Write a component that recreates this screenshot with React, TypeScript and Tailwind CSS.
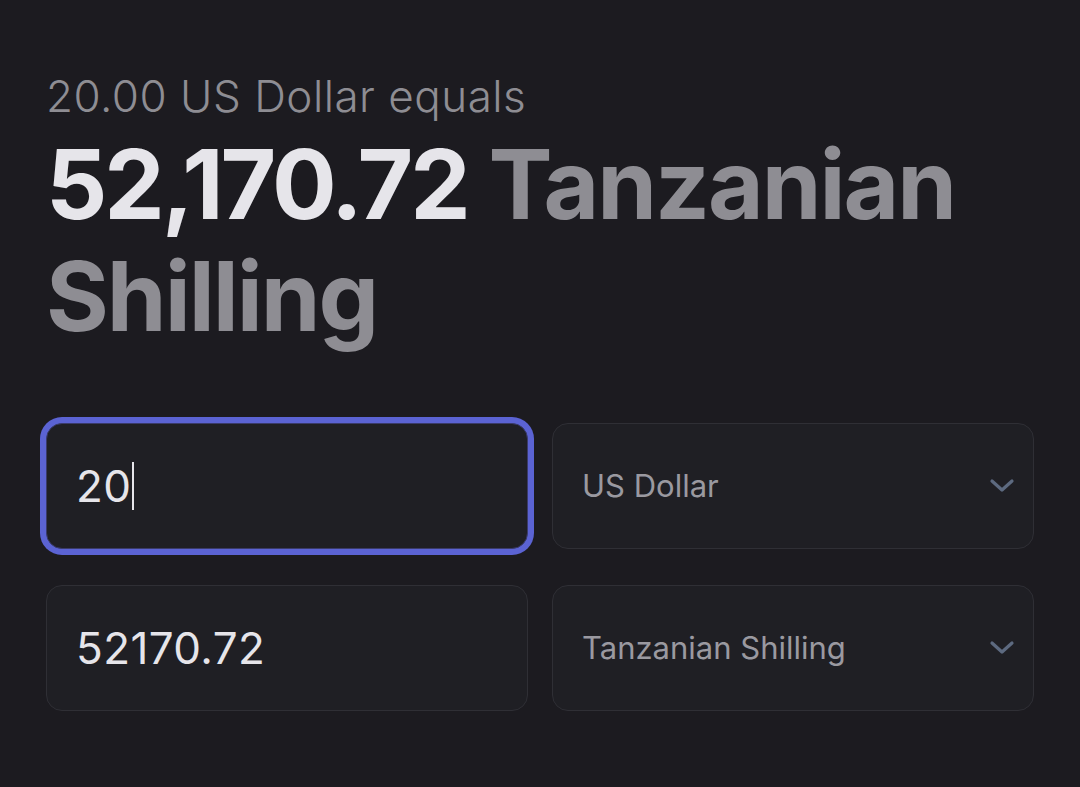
import React from "react";

function Chevron() {
  return (
    <svg width="26" height="16" viewBox="0 0 26 16" fill="none" stroke="#5d6a80" strokeWidth="3.2" strokeLinecap="round" strokeLinejoin="round">
      <path d="M3 3l10 9 10-9" />
    </svg>
  );
}

export default function App() {
  return (
    <div className="min-h-[787px] w-full bg-[#1c1b20] px-[46px] pt-[68px] font-['Inter',sans-serif]">
      <div className="text-[44px] leading-[56px] font-light text-[#8e8d93] tracking-[0.5px]">20.00 US Dollar equals</div>
      <div className="mt-[4px] text-[96px] leading-[112px] font-bold tracking-[-2px]">
        <span className="text-[#e6e5ea] tracking-[-3px]">52,170.72</span>{" "}
        <span className="text-[#8e8d93]">Tanzanian Shilling</span>
      </div>
      <div className="mt-[71px] grid grid-cols-2 gap-x-[24px] gap-y-[36px]">
        <div className="flex h-[126px] items-center rounded-[16px] border border-[#3a3b6a] bg-[#1f1f24] pl-[29px] shadow-[0_0_0_6px_#5b63d3]">
          <span className="text-[44px] text-[#e6e5ea] tracking-[0.4px]">20</span>
          <span className="ml-[1px] h-[48px] w-[2px] bg-[#e6e5ea]" />
        </div>
        <div className="flex h-[126px] items-center justify-between rounded-[16px] border border-[#2f2f35] bg-[#1f1f24] pl-[29px] pr-[18px]">
          <span className="text-[31px] text-[#9a99a0]">US Dollar</span>
          <Chevron />
        </div>
        <div className="flex h-[126px] items-center rounded-[16px] border border-[#2f2f35] bg-[#1f1f24] pl-[29px]">
          <span className="text-[44px] text-[#e6e5ea] tracking-[0.4px]">52170.72</span>
        </div>
        <div className="flex h-[126px] items-center justify-between rounded-[16px] border border-[#2f2f35] bg-[#1f1f24] pl-[29px] pr-[18px]">
          <span className="text-[31px] text-[#9a99a0]">Tanzanian Shilling</span>
          <Chevron />
        </div>
      </div>
    </div>
  );
}
